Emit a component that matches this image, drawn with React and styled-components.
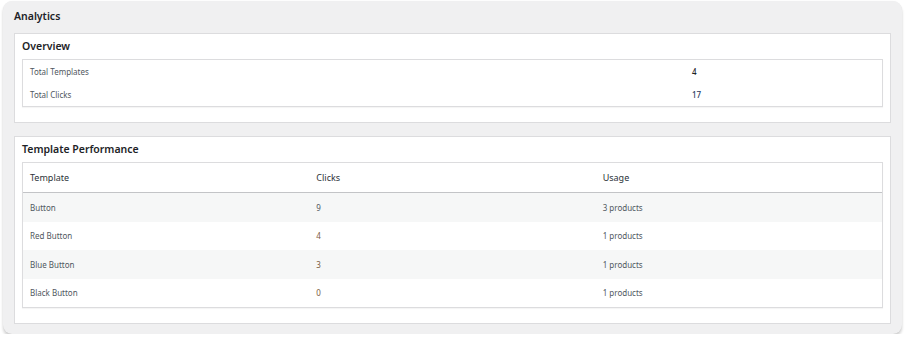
import React from "react";
import styled, { createGlobalStyle } from "styled-components";

const GlobalStyle = createGlobalStyle`
  html, body {
    margin: 0;
    padding: 0;
    background: #ffffff;
  }
  body {
    font-family: "Noto Sans", "Open Sans", sans-serif;
    color: #3c434a;
  }
`;

const Page = styled.div`
  padding: 1px 6px 0 3px;
`;

const Panel = styled.section`
  background: #f0f0f1;
  border-radius: 9px;
  box-shadow: 0 3px 3px rgba(0, 0, 0, 0.18), 0 0 1px rgba(0, 0, 0, 0.08);
  padding: 6px 11px 10px 11px;
  display: flex;
  flex-direction: column;
  gap: 13px;
`;

const PanelTitle = styled.h1`
  margin: 0;
  font-size: 10.5px;
  font-weight: 600;
  color: #1d2327;
  line-height: 18px;
  margin-bottom: -5px;
`;

const Card = styled.div`
  background: #ffffff;
  border: 1px solid #dcdcde;
  padding: 0 7px 15px 7px;
`;

const CardTitle = styled.h2`
  margin: 0;
  font-size: 10.5px;
  font-weight: 600;
  color: #1d2327;
  line-height: 25px;
`;

const Table = styled.div`
  border: 1px solid #dcdcde;
  box-shadow: 0 1px 1px rgba(0, 0, 0, 0.04);
  display: grid;
  grid-template-columns: ${(p) => p.$columns};
`;

const Row = styled.div`
  display: contents;
  & > * {
    background: ${(p) => (p.$striped ? "#f6f7f7" : "#ffffff")};
  }
`;

const Cell = styled.div`
  padding: 0 7px;
  height: ${(p) => p.$height || 28.5}px;
  display: flex;
  align-items: center;
  font-size: 8px;
  color: ${(p) => p.$color || "#50575e"};
  font-weight: ${(p) => (p.$bold ? 500 : 400)};
`;

const HeadCell = styled.div`
  padding: 0 7px;
  height: 29px;
  display: flex;
  align-items: center;
  font-size: 9px;
  color: #2c3338;
  border-bottom: 1px solid #c3c4c7;
  background: #ffffff;
`;

const overview = [
  { label: "Total Templates", value: "4", color: "#1d2327" },
  { label: "Total Clicks", value: "17", color: "#2a3b5e" },
];

const templates = [
  { name: "Button", clicks: 9, usage: 3 },
  { name: "Red Button", clicks: 4, usage: 1 },
  { name: "Blue Button", clicks: 3, usage: 1 },
  { name: "Black Button", clicks: 0, usage: 1 },
];

const App = () => (
  <Page>
    <GlobalStyle />
    <Panel>
      <PanelTitle>Analytics</PanelTitle>
      <Card>
        <CardTitle>Overview</CardTitle>
        <Table $columns="1fr 197px">
          {overview.map((item) => (
            <Row key={item.label}>
              <Cell $height={23}>{item.label}</Cell>
              <Cell $height={23} $color={item.color} $bold>
                {item.value}
              </Cell>
            </Row>
          ))}
        </Table>
      </Card>
      <Card>
        <CardTitle>Template Performance</CardTitle>
        <Table $columns="1fr 1fr 1fr">
          <HeadCell>Template</HeadCell>
          <HeadCell>Clicks</HeadCell>
          <HeadCell>Usage</HeadCell>
          {templates.map((t, i) => (
            <Row key={t.name} $striped={i % 2 === 0}>
              <Cell>{t.name}</Cell>
              <Cell $color={t.clicks < 5 ? "#7a5a3c" : "#50575e"}>{t.clicks}</Cell>
              <Cell>{t.usage} products</Cell>
            </Row>
          ))}
        </Table>
      </Card>
    </Panel>
  </Page>
);

export default App;
